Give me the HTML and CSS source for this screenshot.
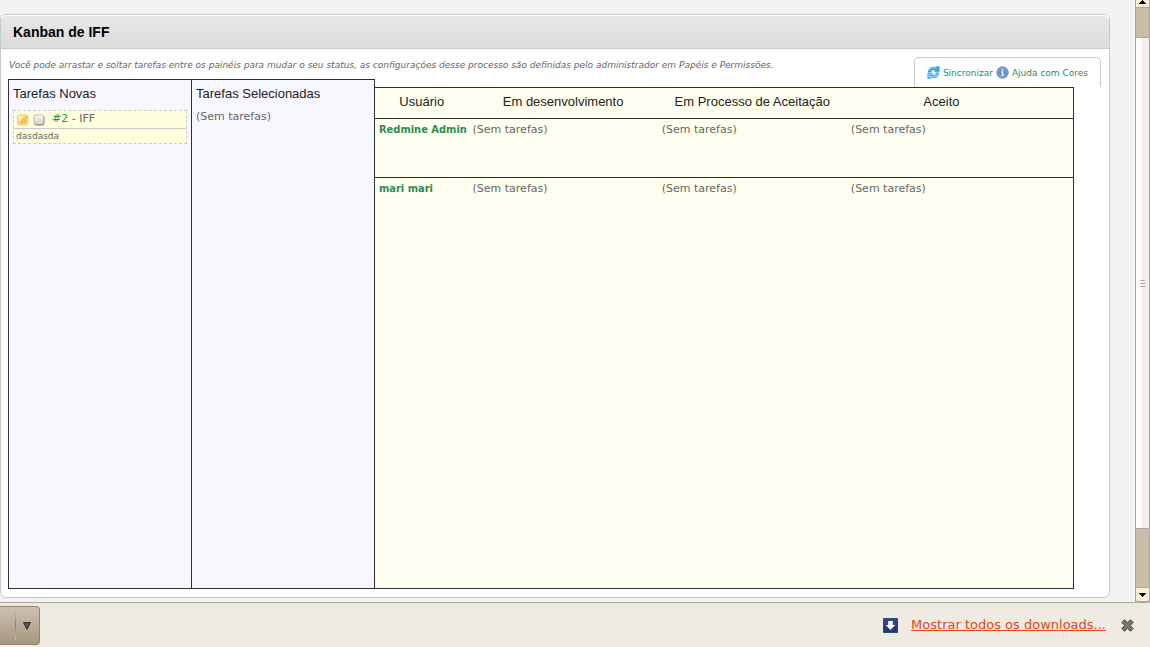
FILE: index.html
```html
<!DOCTYPE html>
<html lang="pt-BR">
<head>
<meta charset="utf-8">
<title>Kanban de IFF</title>
<link rel="stylesheet" href="styles.css">
</head>
<body>
<div class="viewport">
  <main class="page">
    <section class="card">
      <h1 class="card-title">Kanban de IFF</h1>
      <div class="card-body">
        <div class="intro">
          <p class="hint">Você pode arrastar e soltar tarefas entre os painéis para mudar o seu status, as configurações desse processo são definidas pelo administrador em Papéis e Permissões.</p>
          <nav class="contextual">
            <a href="#sync"><svg class="icon" viewBox="0 0 13 13" aria-hidden="true"><path d="M1.2 6.2C1.2 3.2 3.4 1.2 6.2 1.2h2.6L10 .6h2.3v5H7.4l1.3-1.7H6.6C5 3.9 4.3 4.8 4 6.2z" fill="#3aa9ec" stroke="#2585d0" stroke-width=".5"/><path d="M2 5c.4-2 2-3 4.2-3h3" fill="none" stroke="#8ed6fa" stroke-width=".8"/><path d="M11.9 6.8c0 3-2.2 5-5 5H4.3l-1.2.6H.8v-5h4.9L4.4 9.1h2.1c1.6 0 2.3-.9 2.6-2.3z" fill="#74c6f4" stroke="#2585d0" stroke-width=".5"/></svg>Sincronizar</a>
            <a href="#help"><svg class="icon" viewBox="0 0 13 13" aria-hidden="true"><circle cx="6.5" cy="6.5" r="5.8" fill="#5079b4" stroke="#8695b0" stroke-width=".8"/><circle cx="6.5" cy="6.5" r="4.6" fill="#6690c8" stroke="#a9c3e4" stroke-width=".6"/><path d="M5.8 3h1.5v1.4H5.8zM5.3 5.3h2v3.6H8v.9H5.2v-.9h.6V6.2h-.5z" fill="#fff"/></svg>Ajuda com Cores</a>
          </nav>
        </div>
        <div class="board">
          <section class="lane">
            <h2>Tarefas Novas</h2>
            <article class="task">
              <div class="task-head">
                <svg class="task-icon" viewBox="0 0 12 12" aria-hidden="true"><rect x=".5" y="1" width="10.5" height="10" rx="2" fill="#fcd477" stroke="#f7c27c"/><path d="M1 2h6L1 8z" fill="#fff0c5"/><path d="M4 9V7h2V5h2V3h2v7H4z" fill="#f9b84c"/><path d="M3 10h7V4" fill="none" stroke="#ffdc93"/></svg>
                <svg class="task-icon" viewBox="0 0 12 12" aria-hidden="true"><defs><linearGradient id="note" x2="0" y2="1"><stop stop-color="#f8f8f8"/><stop offset="1" stop-color="#cccdd2"/></linearGradient></defs><rect x="1" y="1.2" width="10.4" height="10.2" rx="2.2" fill="#777"/><rect x=".8" y=".8" width="10" height="9.8" rx="2" fill="url(#note)" stroke="#aaa" stroke-width=".7"/></svg>
                <span class="task-id"><a href="#2">#2</a> - IFF</span>
              </div>
              <p class="task-text">dasdasda</p>
            </article>
          </section>
          <section class="lane">
            <h2>Tarefas Selecionadas</h2>
            <p>(Sem tarefas)</p>
          </section>
          <div class="swimlanes">
            <table>
              <colgroup><col class="col-user"><col class="col-status"><col class="col-status"><col class="col-status"><col></colgroup>
              <thead><tr><th scope="col">Usuário</th><th scope="col">Em desenvolvimento</th><th scope="col">Em Processo de Aceitação</th><th scope="col">Aceito</th><td></td></tr></thead>
              <tbody>
                <tr><th scope="row">Redmine Admin</th><td>(Sem tarefas)</td><td>(Sem tarefas)</td><td>(Sem tarefas)</td><td></td></tr>
                <tr><th scope="row">mari mari</th><td>(Sem tarefas)</td><td>(Sem tarefas)</td><td>(Sem tarefas)</td><td></td></tr>
              </tbody>
            </table>
          </div>
        </div>
      </div>
    </section>
  </main>
  <div class="scrollbar" aria-hidden="true">
    <div class="arrow arrow-up"><svg viewBox="0 0 7 4" shape-rendering="crispEdges"><path d="M3 0h1v1h1v1h1v1h1v1H0V3h1V2h1V1h1z"/></svg></div>
    <div class="track-top"></div>
    <div class="thumb"><i></i><i></i><i></i></div>
    <div class="track-bottom"></div>
    <div class="arrow arrow-down"><svg viewBox="0 0 7 4" shape-rendering="crispEdges"><path d="M0 0h7v1H6v1H5v1H4v1H3V3H2V2H1V1H0z"/></svg></div>
  </div>
</div>
<footer class="downloads">
  <button class="download-menu" type="button" aria-label="Opções do download"><svg viewBox="0 0 8 8" aria-hidden="true"><path d="M.5.5h7L4 7.4z" fill="#57554d" stroke="#32332f"/></svg></button>
  <a class="all-downloads" href="#downloads"><svg viewBox="0 0 15 15" aria-hidden="true"><rect width="15" height="15" rx="1" fill="#2d467e"/><path d="M1 8h13v6H1z" fill="#22396e"/><path d="M5.2 3h4.6v4h2.5L7.5 12 2.7 7h2.5z" fill="#fff"/></svg><span>Mostrar todos os downloads...</span></a>
  <button class="close" type="button" aria-label="Fechar"><svg viewBox="0 0 13 13" aria-hidden="true"><path d="M3.5.8 6.5 3.7 9.5.8l2.7 2.7-3 3 3 3-2.7 2.7-3-2.9-3 2.9L.8 9.5l3-3-3-3z" fill="#777870" stroke="#42443f"/></svg></button>
</footer>
</body>
</html>
```
FILE: styles.css
```css
* { box-sizing: border-box; }
body {
  display: flex;
  flex-direction: column;
  min-height: 100vh;
  margin: 0;
  background: #f2f2f2;
  color: #666;
  font: 11px/14px "DejaVu Sans", sans-serif;
}
h1, h2, p { margin: 0; }
a { color: #2e8b57; text-decoration: none; }
svg { display: block; flex: none; }

.viewport { display: flex; flex: 1; }
.page { display: flex; flex: 1; padding: 14px 25px 4px 0; }
.card {
  display: flex;
  flex: 1;
  flex-direction: column;
  border: 1px solid #c9cacc;
  border-radius: 6px;
  background: #fff;
}
.card-title {
  padding: 8px 12px 7px;
  border-top: 1px solid #fff;
  border-bottom: 1px solid #c9cacc;
  border-radius: 5px 5px 0 0;
  background: linear-gradient(#e7e7e7, #dcdcdc);
  color: #000;
  font: bold 14px/17px "Liberation Sans", Arial, sans-serif;
}
.card-body {
  display: flex;
  flex: 1;
  flex-direction: column;
  padding: 8px 8px 8px 7px;
}
.intro { display: flex; justify-content: space-between; }
.hint { padding-left: 1px; font-size: 9px; font-style: italic; line-height: 16px; }
.contextual {
  display: flex;
  gap: 3px;
  height: 30px;
  padding: 0 12px;
  border: 1px solid #c9cacc;
  border-bottom: 0;
  border-radius: 5px 5px 0 0;
  font-size: 9px;
  white-space: nowrap;
}
.contextual a { display: flex; align-items: center; gap: 3px; }
.icon { width: 13px; height: 13px; }

.board {
  display: grid;
  flex: 1;
  grid-template-columns: 183fr 183fr 700fr;
  margin-right: 27px;
}
.lane {
  margin-top: -8px;
  padding: 6px 4px;
  border: 1px solid #2f2f2f;
  border-right: 0;
  background: #f7f7ff;
}
.lane h2, thead th {
  color: #222;
  font: 13px/16px "Liberation Sans", Arial, sans-serif;
}
.lane h2 { margin-bottom: 8px; }
.lane + .lane { position: relative; margin-right: -1px; border-right: 1px solid #2f2f2f; }
.swimlanes { border: 1px solid #2f2f2f; background: #ffffef; }

.task { border: 1px dashed #ccc; background: #ffffde; }
.task-head {
  display: flex;
  align-items: center;
  gap: 4px;
  height: 18px;
  padding: 0 3px;
  border-bottom: 1px solid #ccc;
}
.task-icon { width: 12px; height: 12px; }
.task-id { margin-left: 3px; line-height: 12px; padding-bottom: 2px; }
.task-text { padding-left: 2px; font-size: 9px; }

table { width: 100%; border-collapse: collapse; table-layout: fixed; }
.col-user { width: 13.4%; }
.col-status { width: 27.1%; }
thead tr { height: 30px; border-bottom: 1px solid #2f2f2f; }
tbody tr { height: 59px; }
tbody tr + tr { border-top: 1px solid #2f2f2f; }
th, td { padding: 4px; text-align: left; vertical-align: top; }
thead th { padding: 6px 0; text-align: center; }
tbody th {
  padding-right: 0;
  color: #2e8b57;
  font-family: "DejaVu Sans Condensed", "DejaVu Sans", sans-serif;
  white-space: nowrap;
}

.scrollbar {
  display: flex;
  flex-direction: column;
  width: 15px;
  border: solid #aaa8a5;
  border-width: 0 1px;
  background: #cabda6;
}
.arrow { display: flex; align-items: center; justify-content: center; background: #ffefd1; }
.arrow svg { width: 7px; height: 4px; }
.arrow-up { height: 8px; padding-bottom: 3px; border-bottom: 1px solid #aaa8a5; }
.arrow-down { height: 15px; border: solid #aaa8a5; border-width: 1px 0; border-radius: 0 0 3px 3px; }
.track-top { height: 29px; }
.track-bottom { height: 58px; }
.thumb {
  display: flex;
  flex: 1;
  flex-direction: column;
  align-items: center;
  justify-content: center;
  gap: 2px;
  border: solid #aaa8a5;
  border-width: 1px 0;
  background: linear-gradient(90deg, #fffbf7 50%, #f2eeeb 50%);
}
.thumb i { width: 5px; height: 1px; background: #aaa8a5; }

.downloads {
  display: flex;
  align-items: center;
  height: 45px;
  border-top: 1px solid #aaa8a5;
  background: #efebe3;
}
button { padding: 0; border: 0; background: none; }
.download-menu {
  display: flex;
  align-items: center;
  align-self: flex-start;
  width: 40px;
  height: 39px;
  margin-top: 3px;
  padding-left: 23px;
  border: 1px solid #948472;
  border-left: 0;
  border-radius: 0 4px 4px 0;
  background:
    linear-gradient(#c7b9a8, #8f806c, #c7b9a8) 15px 4px / 1px 29px no-repeat,
    linear-gradient(#cec0b0, #a69780);
}
.download-menu svg { width: 8px; height: 8px; }
.all-downloads {
  display: flex;
  align-items: center;
  gap: 13px;
  margin-left: auto;
  color: #dd4814;
  font-size: 13px;
  line-height: 16px;
}
.all-downloads span { text-decoration: underline; }
.all-downloads svg { width: 15px; height: 15px; }
.close { margin: 0 16px 0 15px; }
.close svg { width: 13px; height: 13px; }
```
